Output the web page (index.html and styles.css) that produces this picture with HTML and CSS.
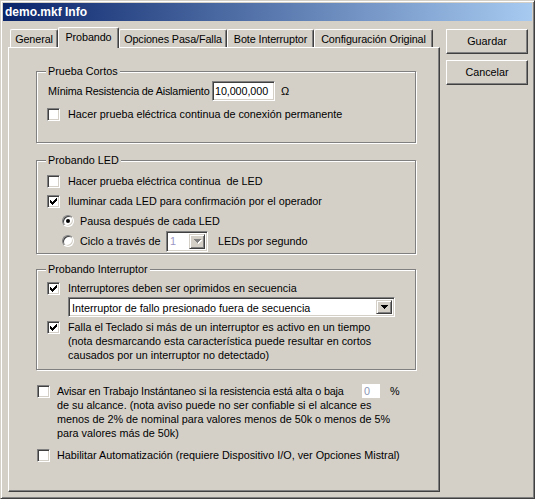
FILE: index.html
```html
<!DOCTYPE html>
<html>
<head>
<meta charset="utf-8">
<title>demo.mkf Info</title>
<link rel="stylesheet" href="styles.css">
</head>
<body>
<div class="window">
  <div class="titlebar">demo.mkf Info</div>
  <div class="client">
    <div class="tabctl">
      <div class="tabstrip">
        <div class="tab t-general">General</div>
        <div class="tab t-probando active">Probando</div>
        <div class="tab t-opciones">Opciones Pasa/Falla</div>
        <div class="tab t-bote">Bote Interruptor</div>
        <div class="tab t-config">Configuración Original</div>
      </div>
      <div class="panel">
        <div class="group g1">
          <div class="caption">Prueba Cortos</div>
          <div class="row r-min">
            <span class="min-label">Mínima Resistencia de Aislamiento</span>
            <span class="edit e-res">10,000,000</span>
            <span class="ohm">Ω</span>
          </div>
          <div class="row r-check g1-check">
            <span class="cb"></span>
            <span class="lbl">Hacer prueba eléctrica continua de conexión permanente</span>
          </div>
        </div>

        <div class="group g2">
          <div class="caption">Probando LED</div>
          <div class="row r-check g2-first">
            <span class="cb"></span>
            <span class="lbl">Hacer prueba eléctrica continua &nbsp;de LED</span>
          </div>
          <div class="row r-check">
            <span class="cb"><svg width="11" height="11" viewBox="0 0 11 11" shape-rendering="crispEdges"><path d="M2 4h1v3h-1zM3 5h1v3h-1zM4 6h1v3h-1zM5 5h1v3h-1zM6 4h1v3h-1zM7 3h1v3h-1zM8 2h1v3h-1z" fill="#000"/></svg></span>
            <span class="lbl">Iluminar cada LED para confirmación por el operador</span>
          </div>
          <div class="row r-radio">
            <span class="rb on"><span class="dot"></span></span>
            <span class="lbl">Pausa después de cada LED</span>
          </div>
          <div class="row r-radio">
            <span class="rb"></span>
            <span class="lbl ciclo-label">Ciclo a través de</span>
            <span class="combo">
              <span class="combo-text">1</span>
              <span class="combo-btn"><svg width="7" height="4" viewBox="0 0 7 4" shape-rendering="crispEdges"><path d="M1 1h7v1h-1v1h-1v1h-1v1h-1v-1h-1v-1h-1v-1h-1z" fill="#fff"/><path d="M0 0h7v1h-1v1h-1v1h-1v1h-1v-1h-1v-1h-1v-1h-1z" fill="#808080"/></svg></span>
            </span>
            <span class="lbl leds">LEDs por segundo</span>
          </div>
        </div>

        <div class="group g3">
          <div class="caption">Probando Interruptor</div>
          <div class="row r-check g3-first">
            <span class="cb"><svg width="11" height="11" viewBox="0 0 11 11" shape-rendering="crispEdges"><path d="M2 4h1v3h-1zM3 5h1v3h-1zM4 6h1v3h-1zM5 5h1v3h-1zM6 4h1v3h-1zM7 3h1v3h-1zM8 2h1v3h-1z" fill="#000"/></svg></span>
            <span class="lbl">Interruptores deben ser oprimidos en secuencia</span>
          </div>
          <div class="dropdown">
            <span class="dd-text">Interruptor de fallo presionado fuera de secuencia</span>
            <span class="dd-btn"><svg width="7" height="4" viewBox="0 0 7 4" shape-rendering="crispEdges"><path d="M0 0h7v1h-1v1h-1v1h-1v1h-1v-1h-1v-1h-1v-1h-1z" fill="#000"/></svg></span>
          </div>
          <div class="row r-multi">
            <span class="cb"><svg width="11" height="11" viewBox="0 0 11 11" shape-rendering="crispEdges"><path d="M2 4h1v3h-1zM3 5h1v3h-1zM4 6h1v3h-1zM5 5h1v3h-1zM6 4h1v3h-1zM7 3h1v3h-1zM8 2h1v3h-1z" fill="#000"/></svg></span>
            <span class="lbl">Falla el Teclado si más de un interruptor es activo en un tiempo<br>(nota desmarcando esta característica puede resultar en cortos<br>causados por un interruptor no detectado)</span>
          </div>
        </div>

        <div class="free">
          <div class="row r-multi free-first">
            <span class="cb"></span>
            <div class="lbl">
              <div class="line1">
                <span class="avisar">Avisar en Trabajo Instántaneo si la resistencia está alta o baja</span>
                <span class="pct-box">0</span>
                <span class="pct">%</span>
              </div>
              <div>de su alcance. (nota aviso puede no ser confiable si el alcance es<br>menos de 2% de nominal para valores menos de 50k o menos de 5%<br>para valores más de 50k)</div>
            </div>
          </div>
          <div class="row r-multi free-second">
            <span class="cb"></span>
            <span class="lbl">Habilitar Automatización (requiere Dispositivo I/O, ver Opciones Mistral)</span>
          </div>
        </div>
      </div>
    </div>
    <div class="buttons">
      <div class="btn">Guardar</div>
      <div class="btn btn2">Cancelar</div>
    </div>
  </div>
</div>
</body>
</html>
```

FILE: styles.css
```css
* { box-sizing: border-box; }
html, body { margin: 0; padding: 0; }
body {
  background: #d4d0c8;
  font-family: "Liberation Sans", Arial, sans-serif;
  font-size: 10.8px;
  color: #000;
}

.window {
  width: 535px;
  height: 499px;
  border: 1px solid;
  border-color: #d4d0c8 #404040 #404040 #d4d0c8;
  box-shadow: inset 1px 1px #fff, inset -1px -1px #808080;
  padding: 2px;
  background: #d4d0c8;
}

.titlebar {
  height: 18px;
  background: linear-gradient(to right, #0a246a, #a6caf0);
  color: #fff;
  font-weight: bold;
  font-size: 12px;
  line-height: 18px;
  padding-left: 2px;
}

.client {
  display: flex;
  padding-top: 6px;
}

.tabctl {
  margin-left: 5px;
  width: 432px;
}

.tabstrip {
  display: flex;
  align-items: flex-end;
  height: 20px;
  padding-left: 2px;
  position: relative;
  z-index: 1;
}

.tab {
  height: 18px;
  border-top: 1px solid #fff;
  border-left: 1px solid #fff;
  border-right: 1px solid #404040;
  border-radius: 2px 2px 0 0;
  box-shadow: inset -1px 0 #808080;
  background: #d4d0c8;
  text-align: center;
  line-height: 17px;
  padding-top: 1px;
  white-space: nowrap;
  letter-spacing: -0.1px;
}
.tab.active {
  height: 21px;
  margin-bottom: -1px;
  padding-top: 0;
  line-height: 18px;
}
.t-general { width: 48px; }
.t-probando { width: 61px; }
.t-opciones { width: 108px; }
.t-bote { width: 87px; }
.t-config { width: 119px; }

.panel {
  height: 445px;
  border: 1px solid;
  border-color: #fff #404040 #404040 #fff;
  box-shadow: inset -1px -1px #808080;
  padding-left: 27px;
}

.group {
  width: 380px;
  border: 1px solid #808080;
  box-shadow: inset 1px 1px #fff, 1px 1px #fff;
}
.g1 { margin-top: 23px; padding-bottom: 18px; }
.g2 { margin-top: 17px; padding-bottom: 2px; }
.g3 { margin-top: 15px; padding-bottom: 7px; }

.caption {
  width: fit-content;
  margin: -7px 0 0 9px;
  padding: 0 2px;
  background: #d4d0c8;
  line-height: 13px;
  height: 13px;
}

.row {
  display: flex;
  align-items: center;
  padding-left: 10px;
}
.lbl { white-space: nowrap; line-height: 14px; }

.r-min { height: 20px; margin-top: 3px; padding-left: 11px; }
.min-label { width: 164px; white-space: nowrap; letter-spacing: -0.18px; }
.edit {
  height: 20px;
  border: 1px solid;
  border-color: #808080 #fff #fff #808080;
  box-shadow: inset 1px 1px #404040, inset -1px -1px #d4d0c8;
  background: #fff;
  padding-left: 2px;
  line-height: 18px;
}
.e-res { width: 63px; letter-spacing: -0.1px; }
.ohm { margin-left: 6px; font-size: 11px; }

.r-check { height: 20px; }
.g1-check { margin-top: 3px; }
.g2-first { margin-top: 4px; }
.g3-first { margin-top: 4px; height: 16px; }

.cb {
  flex: none;
  width: 13px;
  height: 13px;
  border: 1px solid;
  border-color: #808080 #fff #fff #808080;
  box-shadow: inset 1px 1px #404040, inset -1px -1px #d4d0c8;
  background: #fff;
  display: flex;
  margin-right: 8px;
}
.cb svg { display: block; }

.r-radio { height: 20px; padding-left: 25px; }
.rb {
  flex: none;
  width: 12px;
  height: 12px;
  border-radius: 50%;
  border: 1px solid;
  border-color: #808080 #fff #fff #808080;
  box-shadow: inset 1px 1px #404040, inset -1px -1px #d4d0c8;
  background: #fff;
  display: flex;
  align-items: center;
  justify-content: center;
  margin-right: 6px;
}
.dot {
  width: 4px;
  height: 4px;
  border-radius: 50%;
  background: #000;
}
.ciclo-label { width: 86px; }

.combo {
  flex: none;
  display: flex;
  width: 42px;
  height: 21px;
  border: 1px solid;
  border-color: #808080 #fff #fff #808080;
  box-shadow: inset 1px 1px #404040, inset -1px -1px #d4d0c8;
  background: #fff;
  padding: 2px;
}
.combo-text {
  flex: 1;
  color: #9a94c4;
  line-height: 15px;
  padding-left: 1px;
}
.combo-btn, .dd-btn {
  flex: none;
  width: 16px;
  border: 1px solid;
  border-color: #d4d0c8 #404040 #404040 #d4d0c8;
  box-shadow: inset 1px 1px #fff, inset -1px -1px #808080;
  background: #d4d0c8;
  display: flex;
  align-items: center;
  justify-content: center;
}
.combo-btn svg, .dd-btn svg { display: block; overflow: visible; }
.leds { margin-left: 10px; }

.dropdown {
  display: flex;
  width: 327px;
  height: 20px;
  margin: 1px 0 0 31px;
  border: 1px solid;
  border-color: #808080 #fff #fff #808080;
  box-shadow: inset 1px 1px #404040, inset -1px -1px #d4d0c8;
  background: #fff;
  padding: 2px;
}
.dd-text {
  flex: 1;
  line-height: 16px;
  padding-left: 1px;
  white-space: nowrap;
}

.r-multi { align-items: flex-start; }
.r-multi .cb { margin-top: 1px; }
.g3 .r-multi { margin-top: 3px; }

.free { margin-left: 1px; }
.free-first { margin-top: 14px; padding-left: 0; }
.free-first .cb, .free-second .cb { margin-right: 7px; }
.line1 { display: flex; align-items: center; height: 14px; }
.avisar { width: 305px; white-space: nowrap; letter-spacing: -0.15px; }
.pct-box {
  width: 18px;
  height: 14px;
  background: #fff;
  color: #8a96b4;
  padding-left: 2px;
  line-height: 14px;
}
.pct { margin-left: 10px; }
.free-second { margin-top: 8px; padding-left: 0; }

.buttons {
  margin-left: 6px;
  margin-top: 2px;
  width: 82px;
}
.btn {
  height: 25px;
  border: 1px solid;
  border-color: #fff #404040 #404040 #fff;
  box-shadow: inset -1px -1px #808080;
  text-align: center;
  line-height: 23px;
}
.btn2 { margin-top: 6px; }
```
